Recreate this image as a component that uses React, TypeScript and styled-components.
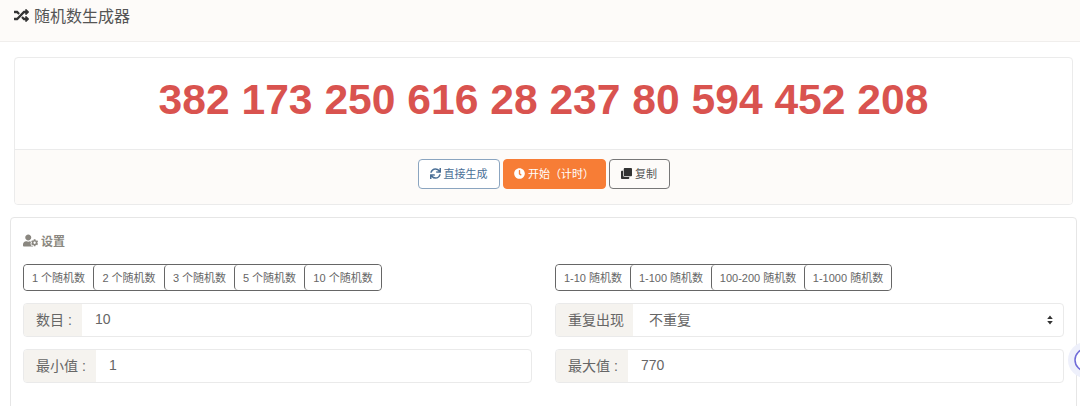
import React from 'react';
import styled, { createGlobalStyle } from 'styled-components';
import { FaRandom, FaSync, FaClock, FaClone, FaUserCog } from 'react-icons/fa';

const GlobalStyle = createGlobalStyle`
  html, body {
    margin: 0;
    padding: 0;
    height: 406px;
    overflow: hidden;
    background: #fff;
    font-family: "Liberation Sans", "Noto Sans CJK SC", sans-serif;
  }
  * { box-sizing: border-box; }
`;

const Page = styled.div`
  position: relative;
  height: 406px;
  overflow: hidden;
`;

const Header = styled.header`
  height: 42px;
  padding: 0 14px 11px;
  display: flex;
  align-items: center;
  gap: 5px;
  background: #fdfbf9;
  border-bottom: 1px solid #f0eeec;
  color: #555;
  font-size: 16px;
  svg { font-size: 15px; color: #333; }
`;

const ResultCard = styled.section`
  margin: 15px 7px 12px 14px;
  height: 148px;
  border: 1px solid #ebebeb;
  border-radius: 4px;
  display: flex;
  flex-direction: column;
  overflow: hidden;
`;

const Numbers = styled.div`
  height: 92px;
  padding-bottom: 9px;
  display: flex;
  align-items: center;
  justify-content: center;
  font-size: 42.6px;
  font-weight: 700;
  color: #d9534f;
  border-bottom: 1px solid #ebebeb;
`;

const Actions = styled.div`
  flex: 1;
  background: #fdfbf9;
  display: flex;
  justify-content: center;
  gap: 3px;
  padding-top: 9px;
`;

const variants = {
  outline: 'background:#fff;color:#4a6f96;border-color:#8ba5c0;',
  primary: 'background:#f77d36;color:#fff;border-color:#f77d36;',
  plain: 'background:#fdfbf9;color:#555;border-color:#777;',
};

const ActionButton = styled.button<{ $kind: keyof typeof variants; $w: number }>`
  width: ${(p) => p.$w}px;
  height: 30px;
  padding: 0 0 2px;
  border: 1px solid;
  border-radius: 4px;
  font: inherit;
  font-size: 11px;
  display: flex;
  align-items: center;
  justify-content: center;
  gap: 3px;
  ${(p) => variants[p.$kind]}
  svg { font-size: 11px; }
  svg.dark { color: #333; }
`;

const SettingsCard = styled.section`
  margin: 0 3px 0 10px;
  height: 200px;
  padding: 13px 12px;
  border: 1px solid #e6e6e6;
  border-radius: 4px;
`;

const SettingsTitle = styled.div`
  display: flex;
  align-items: center;
  gap: 3px;
  height: 18px;
  font-size: 12px;
  font-weight: 700;
  color: #8a8780;
  svg { font-size: 15px; }
`;

const Columns = styled.div`
  margin-top: 15px;
  display: grid;
  grid-template-columns: 509px 509px;
  column-gap: 23px;
`;

const Column = styled.div`
  display: flex;
  flex-direction: column;
`;

const Group = styled.div`
  align-self: flex-start;
  display: flex;
  height: 27px;
  border: 1px solid #666;
  border-radius: 4px;
  margin-bottom: 12px;
`;

const GroupItem = styled.button<{ $w: number }>`
  width: ${(p) => p.$w}px;
  padding: 0 0 2px;
  border: 0;
  border-left: 1px solid #666;
  background: #fff;
  color: #666;
  font: inherit;
  font-size: 11px;
  border-radius: 4px;
  &:first-child { border-left: 0; }
`;

const Field = styled.div`
  position: relative;
  display: flex;
  height: 34px;
  border: 1px solid #eaeaea;
  border-radius: 4px;
  margin-bottom: 12px;
  font-size: 14px;
  overflow: hidden;
`;

const FieldLabel = styled.div<{ $w: number }>`
  width: ${(p) => p.$w}px;
  padding: 0 0 2px 12px;
  display: flex;
  align-items: center;
  background: #f5f3ef;
  color: #666;
`;

const FieldValue = styled.div<{ $select?: boolean }>`
  flex: 1;
  padding: 0 0 2px ${(p) => (p.$select ? 16 : 13)}px;
  display: flex;
  align-items: center;
  color: #666;
`;

const Caret = styled.svg`
  position: absolute;
  right: 10px;
  top: 11px;
`;

const HelpBubble = styled.div`
  position: absolute;
  left: 1068px;
  top: 342px;
  width: 36px;
  height: 36px;
  border-radius: 50%;
  background: #eef0fb;
  display: flex;
  align-items: center;
  justify-content: center;
  svg { display: block; }
`;

const counts = [
  ['1 个随机数', 69],
  ['2 个随机数', 71],
  ['3 个随机数', 70],
  ['5 个随机数', 70],
  ['10 个随机数', 77],
] as const;

const ranges = [
  ['1-10 随机数', 74],
  ['1-100 随机数', 81],
  ['100-200 随机数', 93],
  ['1-1000 随机数', 87],
] as const;

function App() {
  return (
    <Page>
      <GlobalStyle />
      <Header>
        <FaRandom />
        随机数生成器
      </Header>
      <ResultCard>
        <Numbers>382 173 250 616 28 237 80 594 452 208</Numbers>
        <Actions>
          <ActionButton $kind="outline" $w={82}>
            <FaSync />
            直接生成
          </ActionButton>
          <ActionButton $kind="primary" $w={103}>
            <FaClock />
            开始（计时）
          </ActionButton>
          <ActionButton $kind="plain" $w={61}>
            <FaClone className="dark" />
            复制
          </ActionButton>
        </Actions>
      </ResultCard>
      <SettingsCard>
        <SettingsTitle>
          <FaUserCog />
          设置
        </SettingsTitle>
        <Columns>
          <Column>
            <Group>
              {counts.map(([text, w]) => (
                <GroupItem key={text} $w={w}>{text}</GroupItem>
              ))}
            </Group>
            <Field>
              <FieldLabel $w={58}>数目 :</FieldLabel>
              <FieldValue>10</FieldValue>
            </Field>
            <Field>
              <FieldLabel $w={72}>最小值 :</FieldLabel>
              <FieldValue>1</FieldValue>
            </Field>
          </Column>
          <Column>
            <Group>
              {ranges.map(([text, w]) => (
                <GroupItem key={text} $w={w}>{text}</GroupItem>
              ))}
            </Group>
            <Field>
              <FieldLabel $w={77}>重复出现</FieldLabel>
              <FieldValue $select>不重复</FieldValue>
              <Caret width="6" height="10" viewBox="0 0 6 10">
                <path d="M3 0.5 L5.8 4 H0.2 Z M3 9.5 L0.2 6 H5.8 Z" fill="#333" />
              </Caret>
            </Field>
            <Field>
              <FieldLabel $w={72}>最大值 :</FieldLabel>
              <FieldValue>770</FieldValue>
            </Field>
          </Column>
        </Columns>
      </SettingsCard>
      <HelpBubble>
        <svg width="24" height="24" viewBox="0 0 24 24">
          <circle cx="12" cy="12" r="11" fill="#fff" stroke="#6f6bd8" strokeWidth="1.5" />
          <path d="M7 13 q5 5 10 0" fill="none" stroke="#6f6bd8" strokeWidth="1.5" />
        </svg>
      </HelpBubble>
    </Page>
  );
}

export default App;
